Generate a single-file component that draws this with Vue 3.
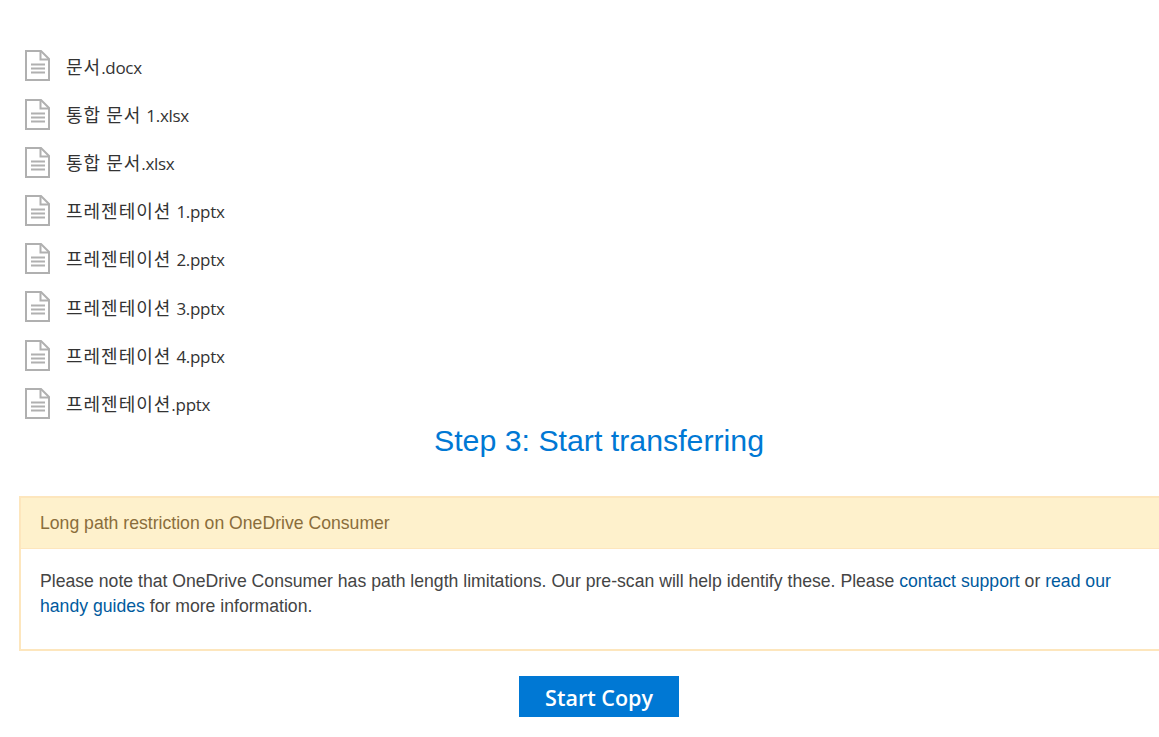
<script setup>
const files = [
  ['문서', '.docx'],
  ['통합 문서 ', '1.xlsx'],
  ['통합 문서', '.xlsx'],
  ['프레젠테이션 ', '1.pptx'],
  ['프레젠테이션 ', '2.pptx'],
  ['프레젠테이션 ', '3.pptx'],
  ['프레젠테이션 ', '4.pptx'],
  ['프레젠테이션', '.pptx'],
]
</script>

<template>
  <div class="page">
    <div class="content">
      <ul class="files">
        <li v-for="f in files" :key="f.join('')" class="file">
          <svg class="icon" width="25" height="31" viewBox="0 0 25 31" fill="none" stroke="#b0b0b0" stroke-width="2">
            <path d="M1 1H16L24 9V30H1Z"/>
            <path d="M15.500 1.500V9.500H23.500"/>
            <path d="M6 14.500H20M6 18.500H20M6 22.500H20"/>
          </svg>
          <span class="name"><span class="ko">{{ f[0] }}</span>{{ f[1] }}</span>
        </li>
      </ul>
      <h2 class="title">Step 3: Start transferring</h2>
      <div class="panel">
        <div class="panel-head">Long path restriction on OneDrive Consumer</div>
        <div class="panel-body">
          Please note that OneDrive Consumer has path length limitations. Our pre-scan will help identify these. Please
          <a>contact support</a> or <a>read our handy guides</a> for more information.
        </div>
      </div>
      <div class="actions"><button class="start">Start Copy</button></div>
    </div>
  </div>
</template>

<style>
html, body { margin: 0; background: #fff; overflow: hidden; }
</style>

<style scoped>
.page { width: 1159px; height: 737px; overflow: hidden; }
.content { width: 1140px; margin-left: 19px; padding-top: 43px; }
.files { list-style: none; margin: 0; padding: 0 0 0 6px; }
.file { display: flex; align-items: center; height: 48.200px; gap: 16px; }
.icon { flex: none; margin-top: -2.400px; }
.name { font: 17px/22px "Open Sans", "Noto Sans CJK KR", sans-serif; color: #333; letter-spacing: -0.300px; white-space: pre; margin-top: -1px; }
.ko { font: 400 18px/22px "Noto Sans CJK KR", sans-serif; letter-spacing: 1px; }
.title { margin: 0; font: 400 30.300px/23px "Liberation Sans", sans-serif; color: #0078d4; text-align: center; width: 1160px; }
.panel { width: 1160px; box-sizing: border-box; margin-top: 44px; border: 2px solid #fde6bd; border-right: 0; font: 17.640px/25px "Liberation Sans", sans-serif; }
.panel-head { background: #fef1cc; color: #8a6d3b; height: 51px; box-sizing: border-box; padding: 13px 19px; border-bottom: 1px solid #fde6bd; }
.panel-body { color: #444; padding: 20px 40px 32px 19px; height: 100px; box-sizing: border-box; }
.panel-body a { color: #005a9e; }
.actions { width: 1160px; display: flex; justify-content: center; margin-top: 25px; }
.start { width: 160px; height: 41px; border: 0; background: #0078d4; color: #fff; font: 600 21.500px/41px "Open Sans", sans-serif; padding: 1px 0 0; }
</style>
